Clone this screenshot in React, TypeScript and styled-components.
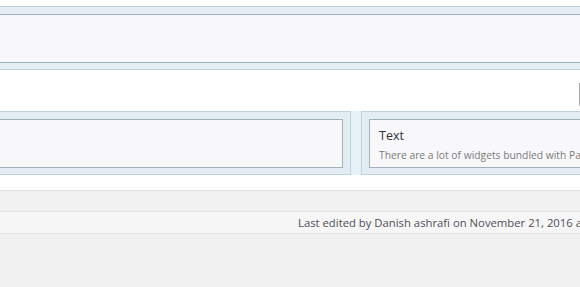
import styled, { createGlobalStyle } from 'styled-components'

const Global = createGlobalStyle`
  html, body {
    margin: 0;
    padding: 0;
    background: #f1f1f1;
    overflow: hidden;
  }
  body {
    font-family: "Open Sans", "Noto Sans", "Liberation Sans", sans-serif;
  }
`

const Viewport = styled.div`
  width: 580px;
  height: 287px;
  overflow: hidden;
`

// the builder is wider than the window; we only see its right part
const Canvas = styled.div`
  width: 1200px;
  margin-left: -400px;
`

const Builder = styled.div`
  background: #fff;
  padding-top: 6px;
  padding-bottom: 15px;
  border-bottom: 1px solid #e2e2e2;
`

const Row = styled.div`
  display: flex;
`

const Cell = styled.div<{ $width?: number }>`
  flex: ${p => (p.$width ? `0 0 ${p.$width}px` : '1 1 auto')};
  background: #e3edf2;
  border: 1px solid #bfd1da;
  padding: 7px 7px 6px;
`

const Gutter = styled.div`
  flex: 0 0 10px;
  background: #e6f2f8;
`

const Widget = styled.div`
  height: 47px;
  background: #f8f8fa;
  border: 1px solid #9fb2bb;
  box-sizing: content-box;
  padding: 0 9px;
  overflow: hidden;
  white-space: nowrap;
`

const Title = styled.div`
  margin-top: 7px;
  font-size: 12.5px;
  line-height: 18px;
  color: #333;
`

const Desc = styled.div`
  margin-top: 3px;
  font-size: 10.3px;
  line-height: 15px;
  color: #7b7b7b;
`

const RowBar = styled.div`
  height: 41px;
  display: flex;
  justify-content: flex-end;
  align-items: flex-start;
`

const MenuButton = styled.div`
  width: 220px;
  height: 23px;
  margin-top: 13px;
  border-left: 1px solid #a9a9a9;
`

const Spacer = styled.div`
  height: 20px;
`

const StatusBar = styled.div`
  height: 21px;
  background: #f6f6f6;
  border-top: 1px solid #e3e3e3;
  border-bottom: 1px solid #e3e3e3;
  display: flex;
  align-items: center;
  padding-left: 698px;
  white-space: nowrap;
  font-size: 11.3px;
  color: #4f4f5a;
`

function App() {
  return (
    <Viewport>
      <Global />
      <Canvas>
        <Builder>
          <Row>
            <Cell>
              <Widget />
            </Cell>
          </Row>
          <RowBar>
            <MenuButton />
          </RowBar>
          <Row>
            <Cell $width={735}>
              <Widget />
            </Cell>
            <Gutter />
            <Cell>
              <Widget>
                <Title>Text</Title>
                <Desc>There are a lot of widgets bundled with Page Builder.</Desc>
              </Widget>
            </Cell>
          </Row>
        </Builder>
        <Spacer />
        <StatusBar>Last edited by Danish ashrafi on November 21, 2016 at 9:41 am</StatusBar>
      </Canvas>
    </Viewport>
  )
}

export default App
